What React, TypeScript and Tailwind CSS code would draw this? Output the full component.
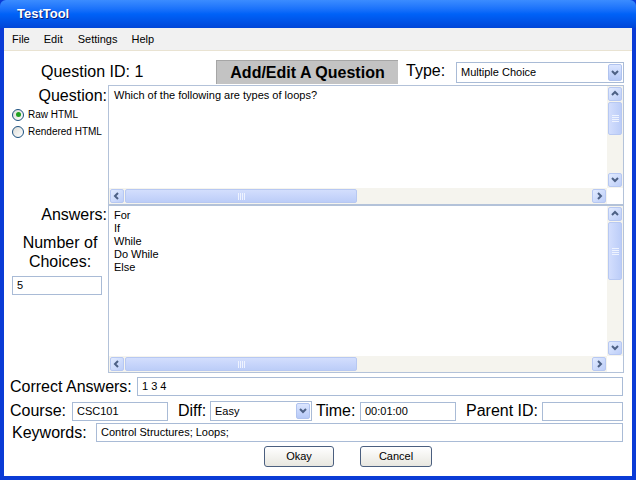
import { ReactNode } from "react";

type Dir = "up" | "down" | "left" | "right";

function Chevron({ dir }: { dir: Dir }) {
  const pts: Record<Dir, string> = {
    up: "1,5 4,2 7,5",
    down: "1,2 4,5 7,2",
    left: "5,1 2,4 5,7",
    right: "3,1 6,4 3,7",
  };
  return (
    <svg width="8" height="8" viewBox="0 0 8 8">
      <polyline points={pts[dir]} fill="none" stroke="#4d6185" strokeWidth="2" />
    </svg>
  );
}

function ScrollButton({ dir }: { dir: Dir }) {
  return (
    <div className="w-[16px] h-[16px] shrink-0 p-px">
      <div className="w-full h-full rounded-[2px] border border-[#b7c8f2] bg-linear-to-br from-[#e2ebff] to-[#bdcef8] flex items-center justify-center">
        <Chevron dir={dir} />
      </div>
    </div>
  );
}

function VScroll({ thumb }: { thumb: number }) {
  return (
    <div className="w-[16px] bg-[#f5f4ee] flex flex-col">
      <ScrollButton dir="up" />
      <div className="px-px shrink-0" style={{ height: thumb }}>
        <div className="w-full h-full rounded-[2px] border border-[#b7c8f2] bg-linear-to-r from-[#d3defd] to-[#bccdf8] flex flex-col items-center justify-center gap-px">
          <div className="w-[7px] h-px bg-[#eef3ff]" />
          <div className="w-[7px] h-px bg-[#eef3ff]" />
          <div className="w-[7px] h-px bg-[#eef3ff]" />
          <div className="w-[7px] h-px bg-[#eef3ff]" />
        </div>
      </div>
      <div className="flex-1" />
      <ScrollButton dir="down" />
    </div>
  );
}

function HScroll() {
  return (
    <div className="h-[16px] bg-[#f5f4ee] flex">
      <ScrollButton dir="left" />
      <div className="w-[232px] py-px shrink-0">
        <div className="w-full h-full rounded-[2px] border border-[#b7c8f2] bg-linear-to-b from-[#d3defd] to-[#bccdf8] flex items-center justify-center gap-px">
          <div className="h-[7px] w-px bg-[#eef3ff]" />
          <div className="h-[7px] w-px bg-[#eef3ff]" />
          <div className="h-[7px] w-px bg-[#eef3ff]" />
          <div className="h-[7px] w-px bg-[#eef3ff]" />
        </div>
      </div>
      <div className="flex-1" />
      <ScrollButton dir="right" />
    </div>
  );
}

function ScrollBox({ children, thumb }: { children: ReactNode; thumb: number }) {
  return (
    <div className="w-[516px] h-full border border-[#b3c2d9] grid grid-cols-[1fr_16px] grid-rows-[1fr_16px]">
      <div className="px-[5px] pt-[3px] text-[11px] leading-[13px] text-black">{children}</div>
      <VScroll thumb={thumb} />
      <HScroll />
      <div className="bg-white" />
    </div>
  );
}

function Field({ value, className }: { value?: string; className: string }) {
  return (
    <div
      className={`h-[19px] border border-[#a9bbd6] bg-white text-[11px] leading-[17px] pl-[4px] text-black ${className}`}
    >
      {value}
    </div>
  );
}

function Select({ value, className, height }: { value: string; className: string; height: string }) {
  return (
    <div className={`${height} border border-[#a9bbd6] bg-white flex items-center ${className}`}>
      <span className="flex-1 pl-[4px] text-[11px] text-black">{value}</span>
      <div className="w-[16px] h-full p-px">
        <div className="w-full h-full rounded-[2px] border border-[#b0c3ef] bg-linear-to-b from-[#dce6ff] to-[#b6c9f7] flex items-center justify-center">
          <Chevron dir="down" />
        </div>
      </div>
    </div>
  );
}

function Radio({ label, checked }: { label: string; checked?: boolean }) {
  return (
    <div className="h-[17px] flex items-center pl-[8px] gap-[4px]">
      <div className="w-[12px] h-[12px] rounded-full border border-[#1c5180] bg-linear-to-br from-[#dcdcd7] to-white flex items-center justify-center">
        {checked && <div className="w-[5px] h-[5px] rounded-full bg-[#21a121]" />}
      </div>
      <span className="text-[10px] text-black">{label}</span>
    </div>
  );
}

function Button({ children, className }: { children: ReactNode; className: string }) {
  return (
    <div
      className={`h-[21px] rounded-[3px] border border-[#4b5f7f] bg-linear-to-b from-white to-[#e8e7e0] flex items-center justify-center text-[11px] text-black ${className}`}
    >
      {children}
    </div>
  );
}

export default function App() {
  return (
    <div className="w-[636px] h-[480px] flex flex-col bg-[#0a3bd6] font-['Liberation_Sans',Arial,sans-serif] overflow-hidden">
      <div className="h-[28px] shrink-0 rounded-t-[6px] bg-linear-to-b from-[#3b8cff] via-[#0062f8] to-[#0046d8] flex items-center pl-[17px]">
        <span className="text-white font-bold text-[13px] [text-shadow:1px_1px_0_#0a1f7a]">TestTool</span>
      </div>
      <div className="flex-1 mx-[4px] mb-[4px] bg-white flex flex-col">
        <div className="h-[23px] shrink-0 bg-[#f1f1f1] border-b border-[#e9e3d2] flex items-center text-[11px] text-black">
          <span className="ml-[8px]">File</span>
          <span className="ml-[14px]">Edit</span>
          <span className="ml-[15px]">Settings</span>
          <span className="ml-[14px]">Help</span>
        </div>

        <div className="mt-[9px] h-[25px] flex items-start">
          <div className="w-[212px] h-[24px] flex items-center pl-[37px] text-[16px] text-black">Question ID: 1</div>
          <div className="w-[182px] h-[24px] bg-[#c3c3c3] border-t border-l border-[#a6a6a6] flex items-center justify-center text-[16px] font-bold text-black">
            Add/Edit A Question
          </div>
          <div className="ml-[8px] w-[50px] h-[22px] flex items-center text-[16px] text-black">Type:</div>
          <Select value="Multiple Choice" className="mt-[2px] w-[168px]" height="h-[21px]" />
        </div>

        <div className="h-[120px] flex">
          <div className="w-[104px] flex flex-col">
            <div className="pt-[2px] leading-[18px] text-[16px] text-right pr-px text-black">Question:</div>
            <div className="mt-px">
              <Radio label="Raw HTML" checked />
              <Radio label="Rendered HTML" />
            </div>
          </div>
          <ScrollBox thumb={33}>Which of the following are types of loops?</ScrollBox>
        </div>

        <div className="h-[168px] flex">
          <div className="w-[104px] flex flex-col text-[16px] text-black">
            <div className="pt-px leading-[18px] text-right pr-px">Answers:</div>
            <div className="mt-[9px] pl-[8px] text-center leading-[19px]">
              Number of
              <br />
              Choices:
            </div>
            <Field value="5" className="mt-[5px] ml-[8px] w-[90px]" />
          </div>
          <ScrollBox thumb={58}>
            <div>For</div>
            <div>If</div>
            <div>While</div>
            <div>Do While</div>
            <div>Else</div>
          </ScrollBox>
        </div>

        <div className="mt-[4px] h-[19px] flex items-center pl-[6px] pr-[9px] text-[16px] text-black">
          <span className="w-[127px]">Correct Answers:</span>
          <Field value="1 3 4" className="flex-1" />
        </div>

        <div className="mt-[5px] h-[20px] flex items-center pl-[6px] pr-[9px] text-[16px] text-black">
          <span className="w-[62px]">Course:</span>
          <Field value="CSC101" className="w-[96px]" />
          <span className="ml-[10px] w-[32px]">Diff:</span>
          <Select value="Easy" className="w-[102px]" height="h-[20px]" />
          <span className="ml-[4px] w-[44px]">Time:</span>
          <Field value="00:01:00" className="w-[96px]" />
          <span className="ml-[10px] w-[76px]">Parent ID:</span>
          <Field className="flex-1" />
        </div>

        <div className="mt-[2px] h-[19px] flex items-center pl-[8px] pr-[9px] text-[16px] text-black">
          <span className="w-[84px]">Keywords:</span>
          <Field value="Control Structures; Loops;" className="flex-1" />
        </div>

        <div className="mt-[4px] h-[21px] flex pl-[260px] gap-[26px]">
          <Button className="w-[70px]">Okay</Button>
          <Button className="w-[72px]">Cancel</Button>
        </div>
      </div>
    </div>
  );
}
